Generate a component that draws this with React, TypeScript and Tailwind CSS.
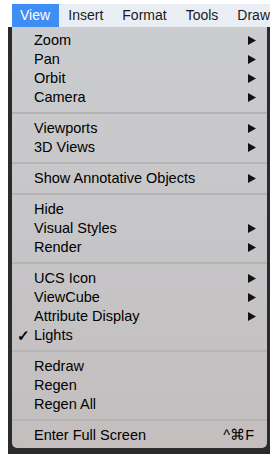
const sections: { label: string; sub?: boolean; check?: boolean; key?: string }[][] = [
  [
    { label: "Zoom", sub: true },
    { label: "Pan", sub: true },
    { label: "Orbit", sub: true },
    { label: "Camera", sub: true },
  ],
  [
    { label: "Viewports", sub: true },
    { label: "3D Views", sub: true },
  ],
  [{ label: "Show Annotative Objects", sub: true }],
  [
    { label: "Hide" },
    { label: "Visual Styles", sub: true },
    { label: "Render", sub: true },
  ],
  [
    { label: "UCS Icon", sub: true },
    { label: "ViewCube", sub: true },
    { label: "Attribute Display", sub: true },
    { label: "Lights", check: true },
  ],
  [{ label: "Redraw" }, { label: "Regen" }, { label: "Regen All" }],
  [{ label: "Enter Full Screen", key: "^⌘F" }],
];

const Arrow = () => (
  <svg width="8" height="9" viewBox="0 0 8 9" className="block">
    <path d="M0 0 L8 4.5 L0 9 Z" fill="#111" />
  </svg>
);

const App = () => {
  return (
    <div
      className="w-[270px] h-[454px] bg-white pt-[4px] flex flex-col overflow-hidden"
      style={{ fontFamily: '"Liberation Sans", Arial, sans-serif' }}
    >
      <div className="ml-[12px] h-[23px] bg-[#e9eef5] flex items-center text-[14px] text-[#1a1a1a]">
        <div className="h-full w-[50px] bg-[#3f8ef6] text-white flex items-center pl-[8px]">
          View
        </div>
        <span className="ml-[9px]">Insert</span>
        <span className="ml-[19px]">Format</span>
        <span className="ml-[19px]">Tools</span>
        <span className="ml-[19px] whitespace-nowrap">Draw</span>
      </div>
      <div className="ml-[8px] flex-1 bg-[#2b2b2e] pl-[4px] pr-[3px] pb-[6px] flex">
        <div className="flex-1 rounded-b-[5px] bg-gradient-to-b from-[#cbcccf] via-[#c6c5c7] to-[#c4bebe] pt-[4px] pb-[3px] text-[14.5px] text-black">
          {sections.map((sec, i) => (
            <div key={i}>
              {i > 0 && (
                <div className="h-[12px] flex items-center">
                  <div className="h-[2px] w-full bg-[#b4b4b6]" />
                </div>
              )}
              {sec.map((item) => (
                <div
                  key={item.label}
                  className="h-[19px] flex items-center pr-[11px]"
                >
                  <span className="w-[22px] pl-[5px] text-[15px] font-bold leading-none">
                    {item.check ? "✓" : ""}
                  </span>
                  <span className="flex-1 leading-none">{item.label}</span>
                  {item.sub && <Arrow />}
                  {item.key && (
                    <span className="leading-none pr-[2px]">{item.key}</span>
                  )}
                </div>
              ))}
            </div>
          ))}
        </div>
      </div>
    </div>
  );
};

export default App;
